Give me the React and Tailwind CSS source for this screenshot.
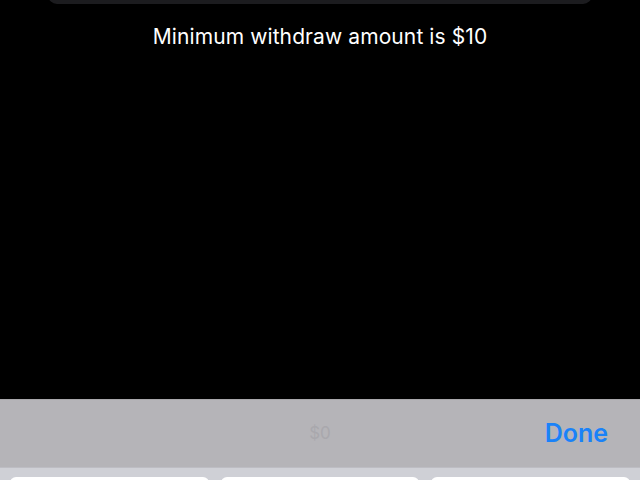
export default function App() {
  const font = { fontFamily: '"Inter", "Liberation Sans", sans-serif' };
  return (
    <div className="h-[480px] w-[640px] overflow-hidden bg-black flex flex-col" style={font}>
      <div className="flex-1 flex flex-col">
        <div className="mx-[48px] -mt-[14px] h-[18px] rounded-[14px] bg-[#1c1c1f]" />
        <p className="mt-[18px] text-center text-[21px] leading-[30px] text-white tracking-[0.1px]">
          Minimum withdraw amount is $10
        </p>
      </div>
      <div className="h-[68px] bg-[#b5b4b8] border-t border-[#a9a8ac] flex items-center relative">
        <span className="absolute left-1/2 -translate-x-1/2 text-[17px] text-[#a9a8ad]">$0</span>
        <button className="ml-auto mr-[32px] text-[25px] font-semibold text-[#1a82f8]">Done</button>
      </div>
      <div className="h-[13px] bg-[#cfd0d6] border-t border-[#bdbdc3] flex gap-[12px] px-[10px] pt-[9px]">
        <div className="flex-1 h-[20px] rounded-[6px] bg-white" />
        <div className="flex-1 h-[20px] rounded-[6px] bg-white" />
        <div className="flex-1 h-[20px] rounded-[6px] bg-white" />
      </div>
    </div>
  );
}
